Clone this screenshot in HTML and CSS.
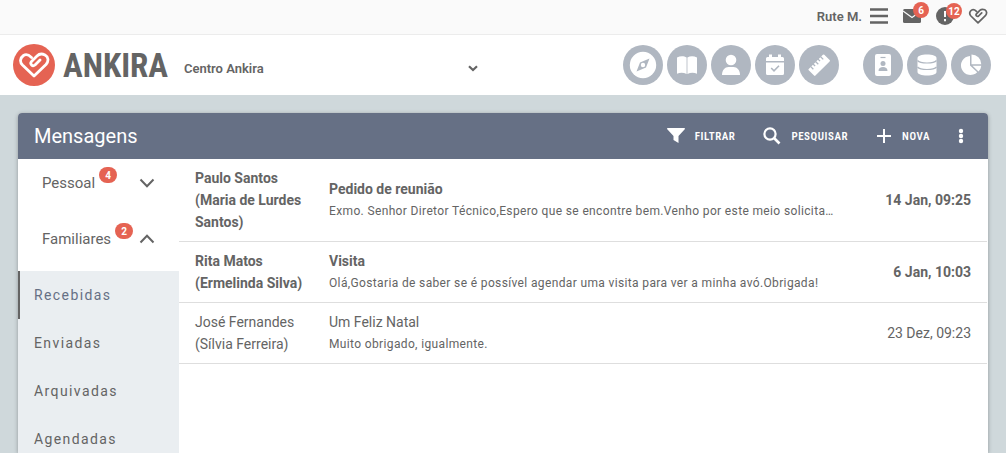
FILE: index.html
```html
<!DOCTYPE html>
<html lang="pt">
<head>
<meta charset="utf-8">
<meta name="viewport" content="width=device-width, initial-scale=1">
<title>Ankira - Mensagens</title>
<link rel="stylesheet" href="styles.css">
</head>
<body>
<svg class="defs" aria-hidden="true">
  <symbol id="heart" viewBox="0 0 32 26">
    <path d="M13.500 5.500C11 3 8 1.800 5.500 3.500C2 6 1.500 10 4.500 13L16 24L28 12.500C31 9 30.500 5 27 3C24 1.500 21 2 19 4L13.500 9.500C11.500 12 14.500 15 17 13L22 8" fill="none" stroke="currentColor" stroke-width="2.800" stroke-linecap="round" stroke-linejoin="round"/>
  </symbol>
  <symbol id="chevron" viewBox="0 0 16 10">
    <path d="M1.500 1.500 8 8.200 14.500 1.500" fill="none" stroke="currentColor" stroke-width="2"/>
  </symbol>
</svg>

<div class="topbar">
  <span class="user">Rute M.</span>
  <button class="top-btn menu" aria-label="Menu">
    <svg width="18" height="16" viewBox="0 0 18 16"><path d="M0 1.500h18M0 8h18M0 14.500h18" stroke="currentColor" stroke-width="2.400"/></svg>
  </button>
  <button class="top-btn mail" aria-label="Mensagens, 6 novas">
    <svg width="18" height="14" viewBox="0 0 18 14"><rect width="18" height="14" rx="1.500" fill="currentColor"/><path d="M0 2 9 8.500 18 2" fill="none" stroke="#fafafa" stroke-width="1.200"/></svg>
    <span class="count on-icon">6</span>
  </button>
  <button class="top-btn alert" aria-label="Alertas, 12 novos">
    <svg width="18" height="18" viewBox="0 0 18 18"><circle cx="9" cy="9" r="9" fill="currentColor"/><path d="M9 4v6M9 12v2.200" stroke="#fafafa" stroke-width="2"/></svg>
    <span class="count on-icon">12</span>
  </button>
  <button class="top-btn" aria-label="Ankira"><svg width="20" height="16"><use href="#heart"/></svg></button>
</div>

<header class="header">
  <a class="logo" href="#" aria-label="Ankira">
    <span class="logo-mark"><svg width="32" height="26"><use href="#heart"/></svg></span>
    <span class="logo-word">ANKIRA</span>
  </a>
  <div class="centre">
    <select aria-label="Centro"><option>Centro Ankira</option></select>
    <svg class="centre-arrow" width="10" height="7" viewBox="0 0 10 7"><path d="M1 1.200 5 5 9 1.200" fill="none" stroke="currentColor" stroke-width="2.200"/></svg>
  </div>
  <nav class="modules" aria-label="Módulos">
    <div class="module-group">
      <a class="module" href="#" aria-label="Explorar"><svg width="28" height="28" viewBox="0 0 28 28"><circle cx="14" cy="14" r="13.200" fill="currentColor"/><path fill-rule="evenodd" d="M20.500 7.500 17 16.500 7.500 20.500 11 11.500zM14 11.800a2.200 2.200 0 1 0 0 4.400 2.200 2.200 0 0 0 0-4.400" fill="#b0b7c1"/></svg></a>
      <a class="module" href="#" aria-label="Livro"><svg width="20" height="20" viewBox="0 0 20 20"><path d="M0 2.500C3.500 .8 7 1 9.600 2.600V19C6.500 17.400 3 17.300 0 18.800zM20 2.500C16.500 .8 13 1 10.400 2.600V19c3.100-1.600 6.600-1.700 9.600-.2z" fill="currentColor"/></svg></a>
      <a class="module" href="#" aria-label="Pessoas"><svg width="20" height="22" viewBox="0 0 20 22"><circle cx="10" cy="6" r="5.300" fill="currentColor"/><path d="M1 21C1 16 4 13 7.500 13h5C16 13 19 16 19 21z" fill="currentColor"/></svg></a>
      <a class="module" href="#" aria-label="Agenda"><svg width="20" height="22" viewBox="0 0 20 22"><path d="M1 7V4.500Q1 3 2.500 3H4V.5h3V3h6V.5h3V3h1.500Q19 3 19 4.500V7zM1 8.500h18v11q0 1.500-1.500 1.500h-15Q1 21 1 19.500z" fill="currentColor"/><path d="m6.200 14 2.800 2.800 5-5" fill="none" stroke="#b0b7c1" stroke-width="1.600"/></svg></a>
      <a class="module" href="#" aria-label="Medidas"><svg width="22" height="22" viewBox="0 0 22 22"><g transform="rotate(-45 11 11)"><rect x="0" y="6.500" width="22" height="9.500" rx="1" fill="currentColor"/><path d="M4 6v4M7.500 6v3M11 6v4M14.500 6v3M18 6v4" stroke="#b0b7c1" stroke-width="1.300"/></g></svg></a>
    </div>
    <div class="module-group">
      <a class="module" href="#" aria-label="Fichas"><svg width="16" height="22" viewBox="0 0 16 22"><rect width="16" height="22" rx="2" fill="currentColor"/><path d="M5.500 3.500h5" stroke="#b0b7c1" stroke-width="1.200"/><circle cx="8" cy="9.500" r="2.500" fill="#b0b7c1"/><path d="M3.500 17c0-3 2-4 4.500-4s4.500 1 4.500 4z" fill="#b0b7c1"/></svg></a>
      <a class="module" href="#" aria-label="Dados"><svg width="20" height="22" viewBox="0 0 20 22"><path d="M.5 4v14c0 2 4 3.500 9.500 3.500s9.500-1.500 9.500-3.500V4C19.500 2 15.500.5 10 .5S.5 2 .5 4" fill="currentColor"/><path d="M.5 6.500C2 8.300 6 9 10 9s8-.7 9.500-2.500M.5 13c1.500 1.800 5.500 2.500 9.500 2.500s8-.7 9.500-2.500" fill="none" stroke="#b0b7c1" stroke-width="1.200"/></svg></a>
      <a class="module" href="#" aria-label="Estatísticas"><svg width="24" height="24" viewBox="0 0 24 24"><path d="M11 3a9.500 9.500 0 1 0 7.200 16.200L11 12.500z" fill="currentColor"/><path d="M12.500 1.500a9.800 9.800 0 0 1 9.800 9.800h-9.800zM13.500 12.800h8.800a9 9 0 0 1-2.800 5.800z" fill="currentColor"/></svg></a>
    </div>
  </nav>
</header>

<main class="card">
  <div class="card-head">
    <h1>Mensagens</h1>
    <div class="actions">
      <button class="action"><svg width="18" height="16" viewBox="0 0 18 16"><path d="M.5 0h17q.8.600 0 1.500L11.500 8v7L6.500 12V8L.5 1.500Q-.3.600.5 0" fill="currentColor"/></svg>FILTRAR</button>
      <button class="action"><svg width="18" height="18" viewBox="0 0 18 18"><circle cx="7" cy="7" r="5.600" fill="none" stroke="currentColor" stroke-width="2.200"/><path d="m11 11 5.500 5.500" stroke="currentColor" stroke-width="2.600"/></svg>PESQUISAR</button>
      <button class="action"><svg width="16" height="16" viewBox="0 0 16 16"><path d="M8 1v14M1 8h14" stroke="currentColor" stroke-width="2"/></svg>NOVA</button>
      <button class="action" aria-label="Mais opções"><svg width="6" height="16" viewBox="0 0 6 16"><circle cx="3" cy="3" r="2.200" fill="currentColor"/><circle cx="3" cy="8" r="2.200" fill="currentColor"/><circle cx="3" cy="13" r="2.200" fill="currentColor"/></svg></button>
    </div>
  </div>
  <div class="card-body">
    <nav class="side" aria-label="Pastas">
      <button class="folder">Pessoal<span class="count">4</span><svg class="chevron" width="16" height="10"><use href="#chevron"/></svg></button>
      <button class="folder" aria-expanded="true">Familiares<span class="count">2</span><svg class="chevron up" width="16" height="10"><use href="#chevron"/></svg></button>
      <div class="subfolders">
        <a class="active" href="#">Recebidas</a>
        <a href="#">Enviadas</a>
        <a href="#">Arquivadas</a>
        <a href="#">Agendadas</a>
      </div>
    </nav>
    <div class="list">
      <table class="messages">
        <tbody>
          <tr class="unread">
            <td class="from">Paulo Santos (Maria de Lurdes Santos)</td>
            <td class="message"><div class="subject">Pedido de reunião</div><div class="snippet">Exmo. Senhor Diretor Técnico,Espero que se encontre bem.Venho por este meio solicita…</div></td>
            <td class="date">14 Jan, 09:25</td>
          </tr>
          <tr class="unread">
            <td class="from">Rita Matos (Ermelinda Silva)</td>
            <td class="message"><div class="subject">Visita</div><div class="snippet">Olá,Gostaria de saber se é possível agendar uma visita para ver a minha avó.Obrigada!</div></td>
            <td class="date">6 Jan, 10:03</td>
          </tr>
          <tr>
            <td class="from">José Fernandes (Sílvia Ferreira)</td>
            <td class="message"><div class="subject">Um Feliz Natal</div><div class="snippet">Muito obrigado, igualmente.</div></td>
            <td class="date">23 Dez, 09:23</td>
          </tr>
        </tbody>
      </table>
    </div>
  </div>
</main>
</body>
</html>
```

FILE: styles.css
```css
* { box-sizing: border-box; }

html, body { height: 100%; }

body {
  margin: 0;
  display: flex;
  flex-direction: column;
  overflow: hidden;
  background: #cfd8db;
  color: #646464;
  font-family: Roboto, "Liberation Sans", sans-serif;
  font-size: 14px;
}

button, select {
  border: 0;
  padding: 0;
  background: none;
  color: inherit;
  font: inherit;
  cursor: pointer;
}

a { color: inherit; text-decoration: none; }
svg { display: block; flex: none; }
.defs { position: absolute; width: 0; height: 0; }

.topbar {
  flex: none;
  display: flex;
  align-items: center;
  justify-content: flex-end;
  height: 35px;
  padding: 0 18px 2px;
  background: #fafafa;
  border-bottom: 1px solid #ececec;
}

.user {
  margin-right: 8px;
  font-size: 13px;
  font-weight: 600;
}

.top-btn { position: relative; }
.menu, .mail { margin-right: 15px; }
.alert { margin-right: 14px; }

.count {
  display: flex;
  align-items: center;
  justify-content: center;
  min-width: 18px;
  height: 16px;
  border-radius: 8px;
  background: #e56353;
  color: #fff;
  font-size: 10px;
  font-weight: 700;
}

.on-icon {
  position: absolute;
  left: 10px;
  top: -7px;
  min-width: 16px;
}

.alert .on-icon { top: -4px; }

.header {
  flex: none;
  display: flex;
  align-items: center;
  height: 60px;
  padding: 0 15px 0 13px;
  background: #fff;
}

.logo { display: flex; align-items: center; width: 171px; }

.logo-mark {
  display: flex;
  align-items: center;
  justify-content: center;
  width: 42px;
  height: 42px;
  margin-right: 8px;
  border-radius: 50%;
  background: #e56353;
  color: #fff;
}

.logo-word {
  font-family: "Roboto Condensed", "Liberation Sans Narrow", Roboto, sans-serif;
  font-size: 33px;
  font-weight: 700;
}

.centre { display: flex; align-items: center; width: 294px; padding-top: 6px; }

.centre select {
  flex: 1;
  margin-right: -10px;
  appearance: none;
  font-size: 13px;
  font-weight: 600;
}

.centre-arrow { pointer-events: none; }

.modules { display: flex; gap: 24px; margin-left: auto; }
.module-group { display: flex; gap: 4px; }

.module {
  display: flex;
  align-items: center;
  justify-content: center;
  width: 40px;
  height: 40px;
  border-radius: 50%;
  background: #b0b7c1;
  color: #fff;
}

.card {
  flex: 1;
  display: flex;
  flex-direction: column;
  min-height: 0;
  margin: 18px 18px 0;
  border-radius: 4px 4px 0 0;
  background: #fff;
  box-shadow: 0 1px 4px rgba(0, 0, 0, .3);
}

.card-head {
  flex: none;
  display: flex;
  align-items: center;
  justify-content: space-between;
  height: 46px;
  padding: 0 24px 0 16px;
  border-radius: 4px 4px 0 0;
  background: #667085;
  color: #fff;
}

h1 { margin: 0; font-size: 20px; font-weight: 400; }

.actions { display: flex; align-items: center; gap: 28px; }

.action {
  display: flex;
  align-items: center;
  gap: 10px;
  font-family: "Roboto Condensed", "Liberation Sans Narrow", Roboto, sans-serif;
  font-size: 11px;
  font-weight: 600;
  letter-spacing: .05em;
}

.card-body { flex: 1; display: flex; min-height: 0; }
.side { flex: none; width: 161px; }

.folder {
  display: flex;
  align-items: center;
  width: 100%;
  height: 48px;
  margin-bottom: 8px;
  padding: 0 24px;
  font-size: 15px;
}

.folder .count { margin: 0 0 16px 4px; }
.chevron { margin-left: auto; }
.up { transform: rotate(180deg); }

.subfolders { background: #eaeef1; }

.subfolders a {
  display: flex;
  align-items: center;
  height: 48px;
  padding-left: 14px;
  border-left: 2px solid transparent;
  letter-spacing: .1em;
}

.subfolders .active { border-color: #646464; color: #667085; }

.list { flex: 1; min-width: 0; padding-right: 1px; }

.messages {
  width: 100%;
  border-collapse: collapse;
  table-layout: fixed;
  line-height: 22px;
}

.messages td { padding: 8px 0; border-bottom: 1px solid #dedede; }
.messages .from { width: 150px; padding: 8px 16px; }
.messages .date { width: 148px; padding-right: 16px; text-align: right; }

.unread .from, .unread .subject, .unread .date { font-weight: 700; }

.snippet {
  overflow: hidden;
  font-size: 12px;
  letter-spacing: .03em;
  text-overflow: ellipsis;
  white-space: nowrap;
}
```
